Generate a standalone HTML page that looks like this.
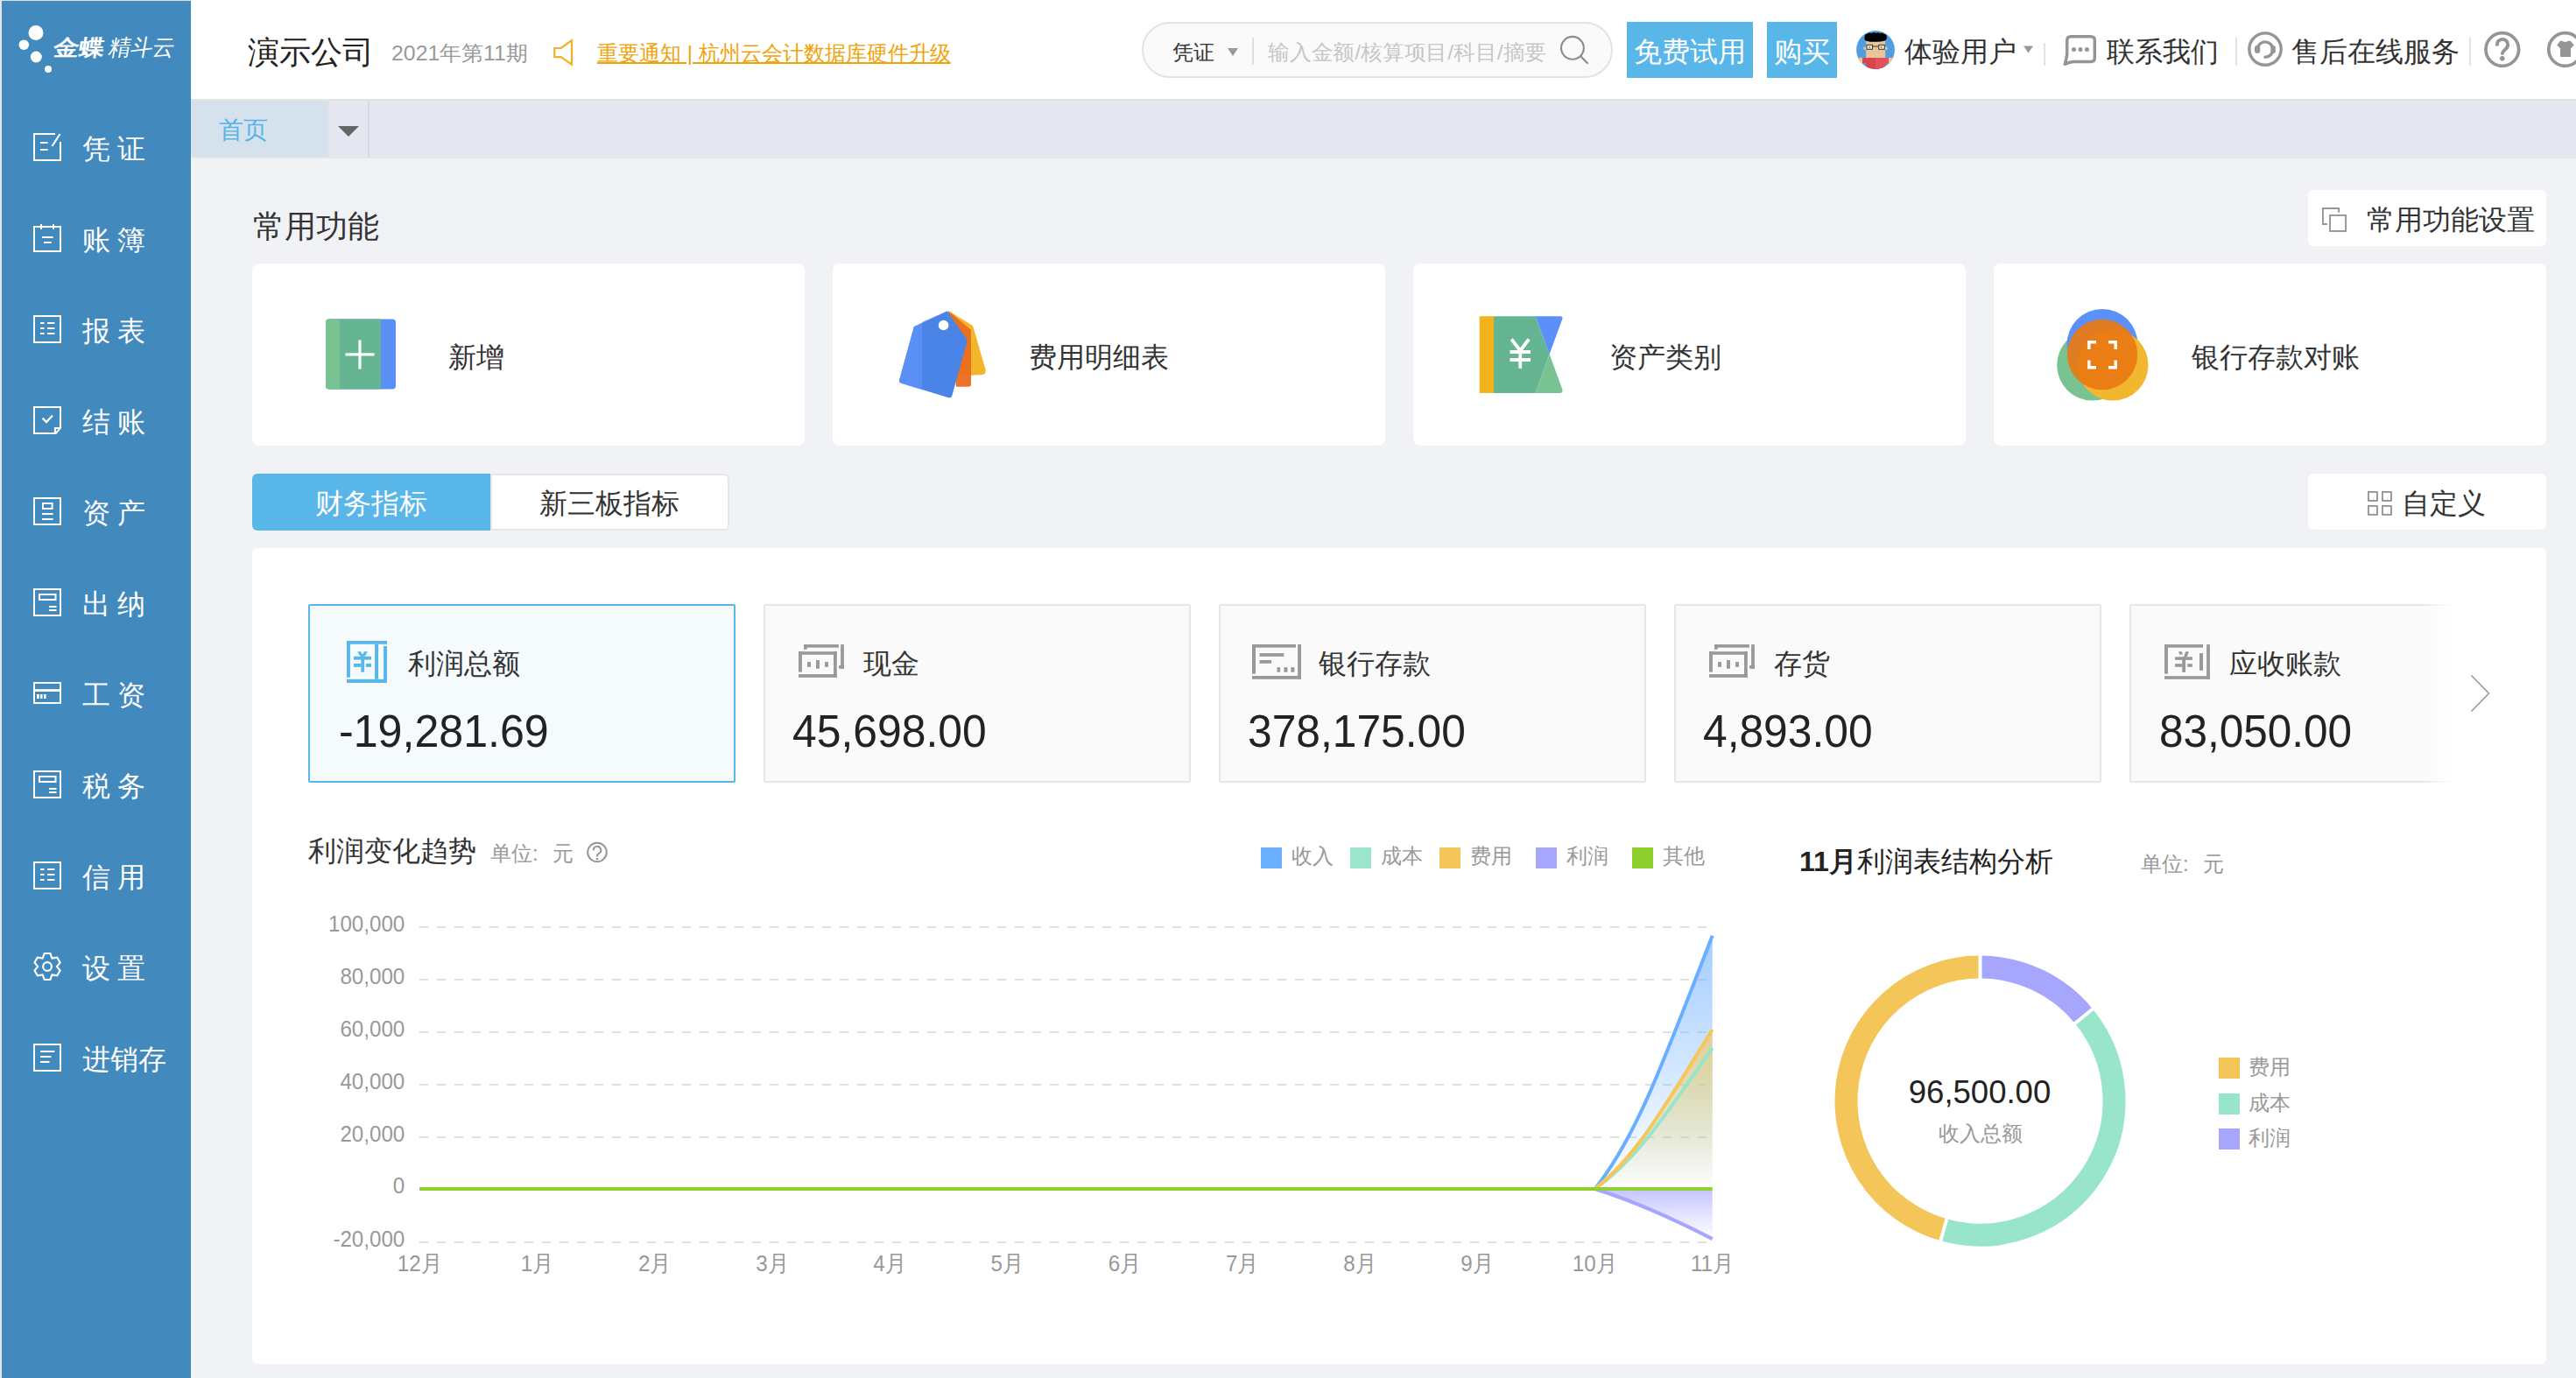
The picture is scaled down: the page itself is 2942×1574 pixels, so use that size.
<!DOCTYPE html>
<html><head><meta charset="utf-8">
<style>
*{margin:0;padding:0;box-sizing:border-box}
html,body{width:2942px;height:1574px;overflow:hidden;background:#f0f2f5;font-family:"Liberation Sans",sans-serif;color:#333}
.a{position:absolute;white-space:nowrap}
.t{position:absolute;white-space:nowrap;line-height:1}
#side{position:absolute;left:0;top:0;width:218px;height:1574px;background:#4289be;border-left:2px solid #e8e6e4;border-top:1px solid #e0e0e0}
#hdr{position:absolute;left:218px;top:0;width:2724px;height:113px;background:#fff}
#tabbar{position:absolute;left:218px;top:113px;width:2724px;height:68px;background:#e4e7ef;border-top:2px solid #e3e3e3;border-bottom:2px solid #e6e6e6}
.card{position:absolute;top:301px;width:631px;height:208px;background:#fff;border-radius:8px}
.stat{position:absolute;top:690px;width:488px;height:204px;background:#fafafa;border:2px solid #e6e6e6;border-radius:2px}
.lbl{font-size:32px;color:#333}
.num{font-size:51px;color:#222;transform-origin:0 0;transform:scaleX(0.975)}
.gl{font-size:24px;color:#999}
</style></head><body>

<div id="side"></div>
<div id="hdr"></div>
<div id="tabbar"></div>

<!-- sidebar text -->
<div class="t" style="left:59px;top:42px;font-size:25px;color:#fff;font-weight:bold;transform:skewX(-9deg) scaleX(1.17);transform-origin:0 100%">金蝶</div><div class="t" style="left:122px;top:41px;font-size:26px;color:#fff;transform:skewX(-10deg) scaleX(0.97);transform-origin:0 100%">精斗云</div>
<div class="t" style="left:94px;top:154px;font-size:32px;color:#fff;letter-spacing:8px">凭证</div>
<div class="t" style="left:94px;top:258px;font-size:32px;color:#fff;letter-spacing:8px">账簿</div>
<div class="t" style="left:94px;top:362px;font-size:32px;color:#fff;letter-spacing:8px">报表</div>
<div class="t" style="left:94px;top:466px;font-size:32px;color:#fff;letter-spacing:8px">结账</div>
<div class="t" style="left:94px;top:570px;font-size:32px;color:#fff;letter-spacing:8px">资产</div>
<div class="t" style="left:94px;top:674px;font-size:32px;color:#fff;letter-spacing:8px">出纳</div>
<div class="t" style="left:94px;top:778px;font-size:32px;color:#fff;letter-spacing:8px">工资</div>
<div class="t" style="left:94px;top:882px;font-size:32px;color:#fff;letter-spacing:8px">税务</div>
<div class="t" style="left:94px;top:986px;font-size:32px;color:#fff;letter-spacing:8px">信用</div>
<div class="t" style="left:94px;top:1090px;font-size:32px;color:#fff;letter-spacing:8px">设置</div>
<div class="t" style="left:94px;top:1194px;font-size:32px;color:#fff">进销存</div>

<!-- header text -->
<div class="t" style="left:283px;top:42px;font-size:36px;color:#222">演示公司</div>
<div class="t" style="left:447px;top:49px;font-size:24px;color:#999;transform:scaleX(1.035);transform-origin:0 0">2021年第11期</div>
<div class="t" style="left:682px;top:49px;font-size:24px;color:#f0a30a;text-decoration:underline">重要通知 | 杭州云会计数据库硬件升级</div>

<div class="a" style="left:1304px;top:25px;width:538px;height:64px;border:2px solid #e3e3e3;background:#fafafa;border-radius:32px"></div>
<div class="t" style="left:1339px;top:48px;font-size:24px;color:#333">凭证</div>
<div class="t" style="left:1448px;top:48px;font-size:24px;color:#c6c6c6;transform:scaleX(1.033);transform-origin:0 0">输入金额/核算项目/科目/摘要</div>

<div class="a" style="left:1858px;top:25px;width:144px;height:64px;background:#58b6e8"></div>
<div class="t" style="left:1866px;top:43px;font-size:32px;color:#fff">免费试用</div>
<div class="a" style="left:2018px;top:25px;width:80px;height:64px;background:#58b6e8"></div>
<div class="t" style="left:2026px;top:43px;font-size:32px;color:#fff">购买</div>
<div class="t" style="left:2175px;top:43px;font-size:32px;color:#333">体验用户</div>
<div class="t" style="left:2406px;top:43px;font-size:32px;color:#333">联系我们</div>
<div class="t" style="left:2617px;top:43px;font-size:32px;color:#333">售后在线服务</div>

<!-- tab bar -->
<div class="a" style="left:218px;top:115px;width:156px;height:64px;background:#d5e1ec"></div>
<div class="a" style="left:374px;top:115px;width:2px;height:64px;background:#e2e2e2"></div>
<div class="a" style="left:420px;top:115px;width:2px;height:64px;background:#d6d9e2"></div>
<div class="t" style="left:250px;top:135px;font-size:28px;color:#55b5e8">首页</div>

<!-- common functions -->
<div class="t" style="left:289px;top:241px;font-size:36px;color:#333">常用功能</div>
<div class="a" style="left:2636px;top:217px;width:272px;height:64px;background:#fff;border-radius:6px"></div>
<div class="t" style="left:2703px;top:235px;font-size:32px;color:#333">常用功能设置</div>

<div class="card" style="left:288px"></div>
<div class="card" style="left:951px"></div>
<div class="card" style="left:1614px"></div>
<div class="card" style="left:2277px"></div>
<div class="t lbl" style="left:512px;top:392px">新增</div>
<div class="t lbl" style="left:1175px;top:392px">费用明细表</div>
<div class="t lbl" style="left:1838px;top:392px">资产类别</div>
<div class="t lbl" style="left:2503px;top:392px">银行存款对账</div>

<!-- tabs -->
<div class="a" style="left:288px;top:541px;width:272px;height:65px;background:#58b6e8;border-radius:6px 0 0 6px"></div>
<div class="a" style="left:560px;top:541px;width:273px;height:65px;background:#fff;border:2px solid #e6e6e6;border-radius:0 6px 6px 0"></div>
<div class="t" style="left:360px;top:559px;font-size:32px;color:#fff">财务指标</div>
<div class="t" style="left:616px;top:559px;font-size:32px;color:#333">新三板指标</div>
<div class="a" style="left:2636px;top:541px;width:272px;height:64px;background:#fff;border-radius:6px"></div>
<div class="t" style="left:2743px;top:559px;font-size:32px;color:#333">自定义</div>

<!-- panel -->
<div class="a" style="left:288px;top:626px;width:2620px;height:932px;background:#fff;border-radius:6px"></div>

<div class="stat" style="left:352px;background:#f5fafd;border-color:#58b6e8"></div>
<div class="stat" style="left:872px"></div>
<div class="stat" style="left:1392px"></div>
<div class="stat" style="left:1912px"></div>
<div class="stat" style="left:2432px;width:476px;border-right:none"></div>
<div class="t lbl" style="left:466px;top:742px">利润总额</div>
<div class="t lbl" style="left:986px;top:742px">现金</div>
<div class="t lbl" style="left:1506px;top:742px">银行存款</div>
<div class="t lbl" style="left:2026px;top:742px">存货</div>
<div class="t lbl" style="left:2546px;top:742px">应收账款</div>
<div class="t num" style="left:387px;top:810px;transform:scaleX(0.983)">-19,281.69</div>
<div class="t num" style="left:905px;top:810px;transform:scaleX(0.977)">45,698.00</div>
<div class="t num" style="left:1425px;top:810px">378,175.00</div>
<div class="t num" style="left:1945px;top:810px">4,893.00</div>
<div class="t num" style="left:2466px;top:810px;transform:scaleX(0.97)">83,050.00</div>
<div class="a" style="left:2765px;top:688px;width:36px;height:208px;background:linear-gradient(to right,rgba(255,255,255,0),#fff)"></div>
<div class="a" style="left:2801px;top:688px;width:107px;height:208px;background:#fff"></div>

<!-- chart header -->
<div class="t" style="left:352px;top:956px;font-size:32px;color:#333">利润变化趋势</div>
<div class="t gl" style="left:560px;top:963px">单位:<span style="margin-left:16px">元</span></div>
<div class="t gl" style="left:1475px;top:966px">收入</div>
<div class="t gl" style="left:1577px;top:966px">成本</div>
<div class="t gl" style="left:1679px;top:966px">费用</div>
<div class="t gl" style="left:1789px;top:966px">利润</div>
<div class="t gl" style="left:1899px;top:966px">其他</div>

<div class="t" style="left:2055px;top:968px;font-size:32px;color:#222"><b>11月</b>利润表结构分析</div>
<div class="t gl" style="left:2445px;top:975px">单位:<span style="margin-left:16px">元</span></div>

<div class="t" style="left:2161px;top:1230px;width:200px;text-align:center;font-size:36.5px;color:#222">96,500.00</div>
<div class="t gl" style="left:2214px;top:1283px">收入总额</div>
<div class="t gl" style="left:2568px;top:1207px">费用</div>
<div class="t gl" style="left:2568px;top:1248px">成本</div>
<div class="t gl" style="left:2568px;top:1288px">利润</div>

<svg id="ov" class="a" style="left:0;top:0" width="2942" height="1574" viewBox="0 0 2942 1574"><g fill="#fff"><circle cx="41" cy="37.5" r="8.5"/><circle cx="27.3" cy="51.2" r="5.8"/><circle cx="41.3" cy="65" r="6.5"/><circle cx="55" cy="79" r="4"/></g><g><path d="M63 153 H39 V183 H69 V162" fill="none" stroke="#fff" stroke-width="2"/><line x1="59.5" y1="167" x2="68.5" y2="153" stroke="#fff" stroke-width="2.2"/><rect x="46" y="162" width="8.600000000000001" height="2" fill="#fff"/><rect x="46" y="170" width="8.600000000000001" height="2" fill="#fff"/><rect x="39" y="259" width="30" height="28" fill="none" stroke="#fff" stroke-width="2"/><rect x="46" y="256" width="2" height="6" fill="#fff"/><rect x="60" y="256" width="2" height="6" fill="#fff"/><rect x="48" y="270" width="12.600000000000001" height="2" fill="#fff"/><rect x="50" y="276" width="8.700000000000003" height="2" fill="#fff"/><rect x="39" y="361" width="30" height="30" fill="none" stroke="#fff" stroke-width="2"/><rect x="46" y="368" width="4.5" height="2" fill="#fff"/><rect x="54" y="368" width="8.399999999999999" height="2" fill="#fff"/><rect x="46" y="374" width="4.5" height="2" fill="#fff"/><rect x="54" y="374" width="8.399999999999999" height="2" fill="#fff"/><rect x="46" y="380" width="4.5" height="2" fill="#fff"/><rect x="54" y="380" width="8.399999999999999" height="2" fill="#fff"/><rect x="39" y="985" width="30" height="30" fill="none" stroke="#fff" stroke-width="2"/><rect x="46" y="992" width="4.5" height="2" fill="#fff"/><rect x="54" y="992" width="8.399999999999999" height="2" fill="#fff"/><rect x="46" y="998" width="4.5" height="2" fill="#fff"/><rect x="54" y="998" width="8.399999999999999" height="2" fill="#fff"/><rect x="46" y="1004" width="4.5" height="2" fill="#fff"/><rect x="54" y="1004" width="8.399999999999999" height="2" fill="#fff"/><path d="M69 489 V465 H39 V495 H63.8 Z" fill="none" stroke="#fff" stroke-width="2" stroke-linejoin="miter"/><path d="M62.9 495 V489 H69" fill="none" stroke="#fff" stroke-width="2"/><polyline points="48.6,477.6 53,482 60,474.6" fill="none" stroke="#fff" stroke-width="2.3"/><rect x="39" y="569" width="30" height="30" fill="none" stroke="#fff" stroke-width="2"/><rect x="49" y="575" width="10.6" height="6" fill="none" stroke="#fff" stroke-width="2"/><rect x="48" y="586" width="12.600000000000001" height="2" fill="#fff"/><rect x="48" y="592" width="12.600000000000001" height="2" fill="#fff"/><rect x="39" y="673" width="30" height="30" fill="none" stroke="#fff" stroke-width="2"/><rect x="45" y="679" width="18.5" height="6" fill="none" stroke="#fff" stroke-width="2"/><rect x="56" y="692" width="8.5" height="2" fill="#fff"/><rect x="56" y="696" width="8.5" height="2" fill="#fff"/><rect x="39" y="881" width="30" height="30" fill="none" stroke="#fff" stroke-width="2"/><rect x="45" y="887" width="18.5" height="6" fill="none" stroke="#fff" stroke-width="2"/><rect x="56" y="900" width="8.5" height="2" fill="#fff"/><rect x="56" y="904" width="8.5" height="2" fill="#fff"/><rect x="39" y="780" width="30" height="23" fill="none" stroke="#fff" stroke-width="2"/><rect x="38" y="787.2" width="32" height="2.7999999999999545" fill="#fff"/><rect x="42" y="793" width="2.799999999999997" height="5" fill="#fff"/><rect x="46" y="793" width="2.5" height="5" fill="#fff"/><rect x="50" y="793" width="2.6000000000000014" height="5" fill="#fff"/><polygon points="50.74,1089.06 57.36,1089.06 59.50,1094.56 65.33,1093.66 68.64,1099.40 64.95,1104.00 68.64,1108.60 65.33,1114.34 59.50,1113.44 57.36,1118.94 50.74,1118.94 48.60,1113.44 42.77,1114.34 39.46,1108.60 43.15,1104.00 39.46,1099.40 42.77,1093.66 48.60,1094.56" fill="none" stroke="#fff" stroke-width="2.1" stroke-linejoin="miter"/><circle cx="54.05" cy="1104" r="4.9" fill="none" stroke="#fff" stroke-width="2.1"/><rect x="39" y="1193" width="30" height="30" fill="none" stroke="#fff" stroke-width="2"/><rect x="46" y="1200" width="16.4" height="2" fill="#fff"/><rect x="46" y="1206" width="12.399999999999999" height="2" fill="#fff"/><rect x="46" y="1212" width="10.5" height="2" fill="#fff"/></g><path d="M633.3 55 V65.1 H640.6 L653 73.6 V46.2 L640.6 55 Z" fill="none" stroke="#f1b027" stroke-width="2.2" stroke-linejoin="miter"/><path d="M1402 55 H1414 L1408 64 Z" fill="#999"/><rect x="1430" y="43" width="2" height="31" fill="#dedede"/><circle cx="1795.9" cy="54.8" r="12.9" fill="none" stroke="#8c8c8c" stroke-width="2.1"/><line x1="1805.2" y1="64.3" x2="1812.9" y2="72" stroke="#8c8c8c" stroke-width="2.2" stroke-linecap="round"/><defs><clipPath id="avc"><circle cx="2142" cy="57" r="21.9"/></clipPath></defs><g clip-path="url(#avc)"><rect x="2118" y="33" width="48" height="48" fill="#4f9ee2"/><rect x="2122" y="65.9" width="40" height="6.3" fill="#e9c89e"/><rect x="2131.2" y="47" width="21.9" height="20" fill="#e8c69c"/><circle cx="2130" cy="55.3" r="1.8" fill="#f0c58e"/><circle cx="2154" cy="55.3" r="1.8" fill="#f0c58e"/><path d="M2129.5 45 Q2129 38.5 2133 38.6 Q2135 36.8 2137.5 38 Q2140 36.3 2142.5 37.8 Q2145 36.4 2147.3 38 Q2150 36.9 2151.5 38.8 Q2155.5 39 2154.8 44 Q2154 48 2142 47.8 Q2130 48 2129.5 45 Z" fill="#000"/><rect x="2131.9" y="51.3" width="6.6" height="5" fill="#f3e7c9" stroke="#3b352d" stroke-width="1"/><circle cx="2135.3" cy="53.8" r="0.9" fill="#3d6fd0"/><rect x="2145.7" y="51.3" width="6.6" height="5" fill="#f3e7c9" stroke="#3b352d" stroke-width="1"/><circle cx="2148.6" cy="53.8" r="0.9" fill="#3d6fd0"/><line x1="2138.5" y1="53" x2="2145.7" y2="53" stroke="#3b352d" stroke-width="1"/><path d="M2127 65.9 H2157 V72.2 H2153.4 V81 H2131 V72.2 H2127 Z" fill="#d9454a"/><path d="M2142 65.9 H2157 V72.2 H2153.4 V81 H2142 Z" fill="#e15a5f" opacity="0.7"/></g><path d="M2311 52.5 H2322 L2316.5 60.5 Z" fill="#999"/><rect x="2334" y="49" width="2" height="26" fill="#e3e3e3"/><rect x="2553" y="43" width="2" height="32" fill="#e3e3e3"/><rect x="2820" y="43" width="2" height="32" fill="#e3e3e3"/><path d="M2360.7 62 V46.3 Q2360.7 41.8 2365.2 41.8 H2387.8 Q2392.3 41.8 2392.3 46.3 V66 Q2392.3 70.5 2387.8 70.5 H2368 Q2364 70.6 2358.2 73.3 Q2360.3 66 2360.7 62 Z" fill="none" stroke="#959595" stroke-width="3.5" stroke-linejoin="round"/><g fill="#959595"><circle cx="2368.5" cy="56.5" r="2.5"/><circle cx="2376" cy="56.5" r="2.5"/><circle cx="2383.4" cy="56.5" r="2.5"/></g><circle cx="2587" cy="56.1" r="18.2" fill="none" stroke="#959595" stroke-width="3.4"/><path d="M2578.3 57 A8.7 8.7 0 1 1 2587 65.3" fill="none" stroke="#959595" stroke-width="3.4" stroke-linecap="round"/><rect x="2575" y="51.7" width="6.2" height="9.2" rx="3" fill="#959595"/><rect x="2593.3" y="52" width="5.5" height="9" rx="2.7" fill="#959595"/><circle cx="2857.8" cy="56.5" r="18.8" fill="none" stroke="#959595" stroke-width="3.7"/><path d="M2851.9 52.6 V51 A6.1 6.1 0 1 1 2862.3 55.3 L2859.6 58 Q2857.8 59.9 2857.8 61.6 V62.6" fill="none" stroke="#959595" stroke-width="3.8"/><circle cx="2857.8" cy="66.7" r="2.8" fill="#959595"/><circle cx="2929.6" cy="56.5" r="18.8" fill="none" stroke="#959595" stroke-width="3.7"/><path d="M2925.5 46.6 Q2929.6 49.5 2934 46.6 L2936 47 L2939.8 51.6 L2936 55.3 V65 H2924 V55.3 L2920.2 51.6 L2923.8 47 Z" fill="#959595"/><path d="M386 144 H410 L398 156 Z" fill="#666"/><path d="M2658 255.95 H2652.95 V237.95 H2671.05 V242.8" fill="none" stroke="#969696" stroke-width="1.9"/><rect x="2661.05" y="245.95" width="18" height="18" fill="none" stroke="#969696" stroke-width="1.9"/><g fill="none" stroke="#969696" stroke-width="1.9"><rect x="2704.95" y="561.95" width="10" height="10"/><rect x="2720.95" y="561.95" width="10" height="10"/><rect x="2704.95" y="577.95" width="10" height="9.9"/><rect x="2720.95" y="577.95" width="10" height="9.9"/></g><defs><clipPath id="c1"><rect x="372" y="364.6" width="80" height="80" rx="4"/></clipPath></defs><g clip-path="url(#c1)"><rect x="372" y="364" width="80" height="81" fill="#5b8ff5"/><rect x="372" y="364" width="63" height="81" fill="#65b592"/><rect x="372" y="364" width="16" height="81" fill="#79c292"/><rect x="394.5" y="403.3" width="33" height="3.2" fill="#fff"/><rect x="409.4" y="388.5" width="3.2" height="33" fill="#fff"/></g><path d="M1083 355 L1111 372 L1125.8 423 Q1126 427 1122 428 L1096 429.6 Z" fill="#f2b52c"/><path d="M1083 355 L1109 377 V439 Q1109 441.7 1106 441.7 L1092 441.7 Z" fill="#eb6b1b" opacity="0.95"/><path d="M1081.7 355.3 L1105 388.6 L1087.3 452 Q1086.5 455 1083.5 454.2 L1029.5 437.8 Q1026.5 436.8 1027.2 434 L1043.8 373.3 Z" fill="#4a84e6"/><path d="M1081.7 355.3 L1043.8 373.3 L1027.2 434 Q1026.5 436.8 1029.5 437.8 L1053 445 L1053 368 Z" fill="#5b90f8" opacity="0.9"/><circle cx="1077.6" cy="371.5" r="5.8" fill="#fff"/><rect x="1689.7" y="361.2" width="16.3" height="87.7" fill="#f0b31a"/><path d="M1706 361.2 H1753.7 L1769.6 404.5 L1753.7 448.9 H1706 Z" fill="#65b592"/><path d="M1753.7 361.2 H1782 Q1785.5 361.5 1784.3 364.6 L1769.6 404.5 Z" fill="#5b8ff9"/><path d="M1769.6 404.5 L1784.3 444.6 Q1785.3 448.9 1781.5 448.9 H1753.7 Z" fill="#79c292"/><path d="M1726.3 387.5 L1736.2 400.5 L1746.1 387.5 M1736.2 400.5 V420.7 M1724.5 402 H1748 M1724.5 411 H1748" fill="none" stroke="#fff" stroke-width="3.8"/><circle cx="2389.7" cy="417" r="40.5" fill="#79c292"/><circle cx="2401" cy="393.5" r="40.5" fill="#5b8ff9"/><circle cx="2413" cy="417" r="40.5" fill="#f1b72e"/><circle cx="2401" cy="405" r="40.2" fill="#e97a12" opacity="0.93"/><path d="M2385.8 399 V390.8 H2394 M2408 390.8 H2416.2 V399 M2416.2 411.5 V419.7 H2408 M2394 419.7 H2385.8 V411.5" fill="none" stroke="#fff" stroke-width="3.4"/><rect x="396.00" y="732.00" width="46.00" height="3.80" fill="#58b6e8"/><rect x="396.00" y="732.00" width="3.90" height="41.80" fill="#58b6e8"/><rect x="396.00" y="775.80" width="46.00" height="4.20" fill="#58b6e8"/><rect x="428.10" y="735.80" width="4.00" height="40.00" fill="#58b6e8"/><rect x="438.10" y="738.00" width="3.90" height="42.00" fill="#58b6e8"/><rect x="403.90" y="749.80" width="20.10" height="3.80" fill="#58b6e8"/><rect x="403.90" y="757.90" width="8.40" height="4.00" fill="#58b6e8"/><rect x="418.00" y="757.90" width="6.00" height="4.00" fill="#58b6e8"/><rect x="412.30" y="749.80" width="3.80" height="17.90" fill="#58b6e8"/><polygon points="408.2,744.2 412,744.2 415.3,749.8 411.5,749.8" fill="#58b6e8"/><polygon points="416,744.2 419.9,744.2 416.6,749.8 412.8,749.8" fill="#58b6e8"/><rect x="918.00" y="736.10" width="39.90" height="3.60" fill="#999"/><rect x="918.00" y="736.10" width="3.80" height="5.70" fill="#999"/><rect x="960.10" y="736.10" width="3.80" height="27.60" fill="#999"/><rect x="958.00" y="760.10" width="5.90" height="3.60" fill="#999"/><rect x="912.00" y="744.20" width="43.80" height="3.60" fill="#999"/><rect x="912.00" y="744.20" width="3.90" height="23.40" fill="#999"/><rect x="912.00" y="770.10" width="43.80" height="3.80" fill="#999"/><rect x="952.00" y="744.20" width="3.80" height="29.70" fill="#999"/><rect x="922.00" y="756.10" width="4.00" height="5.70" fill="#999"/><rect x="932.00" y="754.00" width="4.00" height="9.70" fill="#999"/><rect x="942.00" y="756.10" width="4.00" height="5.70" fill="#999"/><rect x="1430.00" y="736.00" width="50.00" height="3.70" fill="#999"/><rect x="1482.10" y="736.00" width="3.90" height="39.80" fill="#999"/><rect x="1430.00" y="772.00" width="56.00" height="3.80" fill="#999"/><rect x="1430.00" y="736.00" width="4.00" height="33.70" fill="#999"/><rect x="1438.50" y="746.10" width="27.90" height="3.80" fill="#999"/><rect x="1438.50" y="754.00" width="13.70" height="3.80" fill="#999"/><rect x="1458.40" y="762.20" width="3.70" height="5.50" fill="#999"/><rect x="1466.40" y="762.20" width="4.10" height="5.50" fill="#999"/><rect x="1474.30" y="762.20" width="4.10" height="5.50" fill="#999"/><rect x="1958.00" y="736.10" width="39.90" height="3.60" fill="#999"/><rect x="1958.00" y="736.10" width="3.80" height="5.70" fill="#999"/><rect x="2000.10" y="736.10" width="3.80" height="27.60" fill="#999"/><rect x="1998.00" y="760.10" width="5.90" height="3.60" fill="#999"/><rect x="1952.00" y="744.20" width="43.80" height="3.60" fill="#999"/><rect x="1952.00" y="744.20" width="3.90" height="23.40" fill="#999"/><rect x="1952.00" y="770.10" width="43.80" height="3.80" fill="#999"/><rect x="1992.00" y="744.20" width="3.80" height="29.70" fill="#999"/><rect x="1962.00" y="756.10" width="4.00" height="5.70" fill="#999"/><rect x="1972.00" y="754.00" width="4.00" height="9.70" fill="#999"/><rect x="1982.00" y="756.10" width="4.00" height="5.70" fill="#999"/><rect x="2472.00" y="736.10" width="44.00" height="3.60" fill="#999"/><rect x="2472.00" y="736.10" width="3.90" height="33.60" fill="#999"/><rect x="2472.00" y="772.20" width="51.90" height="3.60" fill="#999"/><rect x="2520.10" y="736.10" width="3.80" height="39.70" fill="#999"/><rect x="2512.00" y="746.10" width="4.00" height="19.70" fill="#999"/><rect x="2484.10" y="750.30" width="19.80" height="3.60" fill="#999"/><rect x="2484.10" y="758.20" width="8.10" height="3.60" fill="#999"/><rect x="2498.20" y="758.20" width="5.70" height="3.60" fill="#999"/><rect x="2492.20" y="750.30" width="3.80" height="17.50" fill="#999"/><polygon points="2488,744.2 2491.8,744.2 2492.9,747.6 2489.2,747.6" fill="#999"/><polygon points="2496.1,744.2 2499.9,744.2 2497.8,750.3 2494.1,750.3" fill="#999"/><polyline points="2822.5,771.5 2842.5,792 2822.5,812.5" fill="none" stroke="#999" stroke-width="1.6"/><circle cx="682" cy="973.5" r="10.8" fill="none" stroke="#959595" stroke-width="2"/><path d="M677.9 971.3 A4.2 4.2 0 1 1 684.2 974.6 Q682 975.8 682 977.6 V978.6" fill="none" stroke="#959595" stroke-width="2"/><circle cx="682" cy="981" r="1.3" fill="#959595"/><rect x="1440" y="968" width="24" height="24" fill="#6aaeff"/><rect x="1542" y="968" width="24" height="24" fill="#9ae5cb"/><rect x="1644" y="968" width="24" height="24" fill="#f5c65a"/><rect x="1754" y="968" width="24" height="24" fill="#a6a6fd"/><rect x="1864" y="968" width="24" height="24" fill="#8fd02f"/><line x1="479" y1="1059" x2="1956" y2="1059" stroke="#e0e0e0" stroke-width="2" stroke-dasharray="10 10"/><line x1="479" y1="1119" x2="1956" y2="1119" stroke="#e0e0e0" stroke-width="2" stroke-dasharray="10 10"/><line x1="479" y1="1179" x2="1956" y2="1179" stroke="#e0e0e0" stroke-width="2" stroke-dasharray="10 10"/><line x1="479" y1="1239" x2="1956" y2="1239" stroke="#e0e0e0" stroke-width="2" stroke-dasharray="10 10"/><line x1="479" y1="1299" x2="1956" y2="1299" stroke="#e0e0e0" stroke-width="2" stroke-dasharray="10 10"/><line x1="479" y1="1358" x2="1956" y2="1358" stroke="#e0e0e0" stroke-width="2" stroke-dasharray="10 10"/><line x1="479" y1="1419" x2="1956" y2="1419" stroke="#e0e0e0" stroke-width="2" stroke-dasharray="10 10"/><text transform="translate(462.3 1064.2) scale(0.915 1)" text-anchor="end" style="font-family:'Liberation Sans'" font-size="26.4" fill="#999">100,000</text><text transform="translate(462.3 1124.2) scale(0.915 1)" text-anchor="end" style="font-family:'Liberation Sans'" font-size="26.4" fill="#999">80,000</text><text transform="translate(462.3 1184.2) scale(0.915 1)" text-anchor="end" style="font-family:'Liberation Sans'" font-size="26.4" fill="#999">60,000</text><text transform="translate(462.3 1244.2) scale(0.915 1)" text-anchor="end" style="font-family:'Liberation Sans'" font-size="26.4" fill="#999">40,000</text><text transform="translate(462.3 1304.2) scale(0.915 1)" text-anchor="end" style="font-family:'Liberation Sans'" font-size="26.4" fill="#999">20,000</text><text transform="translate(462.3 1363.2) scale(0.915 1)" text-anchor="end" style="font-family:'Liberation Sans'" font-size="26.4" fill="#999">0</text><text transform="translate(462.3 1424.2) scale(0.915 1)" text-anchor="end" style="font-family:'Liberation Sans'" font-size="26.4" fill="#999">-20,000</text><text transform="translate(479.3 1452) scale(0.93 1)" text-anchor="middle" style="font-family:'Liberation Sans'" font-size="26" fill="#999">12月</text><text transform="translate(613.5 1452) scale(0.93 1)" text-anchor="middle" style="font-family:'Liberation Sans'" font-size="26" fill="#999">1月</text><text transform="translate(747.7 1452) scale(0.93 1)" text-anchor="middle" style="font-family:'Liberation Sans'" font-size="26" fill="#999">2月</text><text transform="translate(881.9 1452) scale(0.93 1)" text-anchor="middle" style="font-family:'Liberation Sans'" font-size="26" fill="#999">3月</text><text transform="translate(1016.1 1452) scale(0.93 1)" text-anchor="middle" style="font-family:'Liberation Sans'" font-size="26" fill="#999">4月</text><text transform="translate(1150.3 1452) scale(0.93 1)" text-anchor="middle" style="font-family:'Liberation Sans'" font-size="26" fill="#999">5月</text><text transform="translate(1284.5 1452) scale(0.93 1)" text-anchor="middle" style="font-family:'Liberation Sans'" font-size="26" fill="#999">6月</text><text transform="translate(1418.7 1452) scale(0.93 1)" text-anchor="middle" style="font-family:'Liberation Sans'" font-size="26" fill="#999">7月</text><text transform="translate(1552.9 1452) scale(0.93 1)" text-anchor="middle" style="font-family:'Liberation Sans'" font-size="26" fill="#999">8月</text><text transform="translate(1687.1 1452) scale(0.93 1)" text-anchor="middle" style="font-family:'Liberation Sans'" font-size="26" fill="#999">9月</text><text transform="translate(1821.3 1452) scale(0.93 1)" text-anchor="middle" style="font-family:'Liberation Sans'" font-size="26" fill="#999">10月</text><text transform="translate(1955.5 1452) scale(0.93 1)" text-anchor="middle" style="font-family:'Liberation Sans'" font-size="26" fill="#999">11月</text><defs><linearGradient id="gb" x1="0" y1="1068.7" x2="0" y2="1357.8" gradientUnits="userSpaceOnUse"><stop offset="0" stop-color="#6aaeff" stop-opacity="0.62"/><stop offset="1" stop-color="#6aaeff" stop-opacity="0"/></linearGradient><linearGradient id="gt" x1="0" y1="1197" x2="0" y2="1357.8" gradientUnits="userSpaceOnUse"><stop offset="0" stop-color="#98e5cb" stop-opacity="0.3"/><stop offset="1" stop-color="#98e5cb" stop-opacity="0"/></linearGradient><linearGradient id="gy" x1="0" y1="1176" x2="0" y2="1357.8" gradientUnits="userSpaceOnUse"><stop offset="0" stop-color="#f5c65a" stop-opacity="0.66"/><stop offset="1" stop-color="#f5c65a" stop-opacity="0"/></linearGradient><linearGradient id="gp" x1="0" y1="1357.8" x2="0" y2="1415.1" gradientUnits="userSpaceOnUse"><stop offset="0" stop-color="#a6a6fe" stop-opacity="0.65"/><stop offset="1" stop-color="#a6a6fe" stop-opacity="0"/></linearGradient></defs><path d="M1821.5 1358 C1869.3 1298 1899.3 1213.5 1955.7 1068.7 V1358 Z" fill="url(#gb)"/><path d="M1821.5 1358 C1869.3 1324.5 1899.3 1277.4 1955.7 1197 V1358 Z" fill="url(#gt)"/><path d="M1821.5 1358 C1869.3 1320.2 1899.3 1266.9 1955.7 1176 V1358 Z" fill="url(#gy)"/><path d="M1821.5 1358 C1869.8 1373.1 1918.4 1395.9 1955.7 1415.1 V1358 Z" fill="url(#gp)"/><path d="M479.3 1358 H1821.5 C1869.3 1298 1899.3 1213.5 1955.7 1068.7" fill="none" stroke="#6aaeff" stroke-width="4" stroke-linejoin="round"/><path d="M479.3 1358 H1821.5 C1869.3 1324.5 1899.3 1277.4 1955.7 1197" fill="none" stroke="#98e5cb" stroke-width="4" stroke-linejoin="round"/><path d="M479.3 1358 H1821.5 C1869.3 1320.2 1899.3 1266.9 1955.7 1176" fill="none" stroke="#f5c65a" stroke-width="4" stroke-linejoin="round"/><path d="M479.3 1358 H1821.5 C1869.8 1373.1 1918.4 1395.9 1955.7 1415.1" fill="none" stroke="#a6a6fe" stroke-width="4" stroke-linejoin="round"/><line x1="479.3" y1="1358" x2="1955.7" y2="1358" stroke="#8fd02f" stroke-width="4"/><path d="M2261.50 1104.60 A153 153 0 0 1 2379.90 1160.69" fill="none" stroke="#a6a6fd" stroke-width="26"/><path d="M2379.90 1160.69 A153 153 0 0 1 2219.84 1404.82" fill="none" stroke="#98e5cb" stroke-width="26"/><path d="M2219.84 1404.82 A153 153 0 0 1 2261.50 1104.60" fill="none" stroke="#f4c65a" stroke-width="26"/><line x1="2261.50" y1="1121.60" x2="2261.50" y2="1087.60" stroke="#fff" stroke-width="4"/><line x1="2366.74" y1="1171.46" x2="2393.05" y2="1149.93" stroke="#fff" stroke-width="4"/><line x1="2224.47" y1="1388.46" x2="2215.21" y2="1421.18" stroke="#fff" stroke-width="4"/><rect x="2534" y="1208" width="24" height="24" fill="#f4c65a"/><rect x="2534" y="1249" width="24" height="24" fill="#98e5cb"/><rect x="2534" y="1289" width="24" height="24" fill="#a6a6fd"/></svg>
</body></html>
